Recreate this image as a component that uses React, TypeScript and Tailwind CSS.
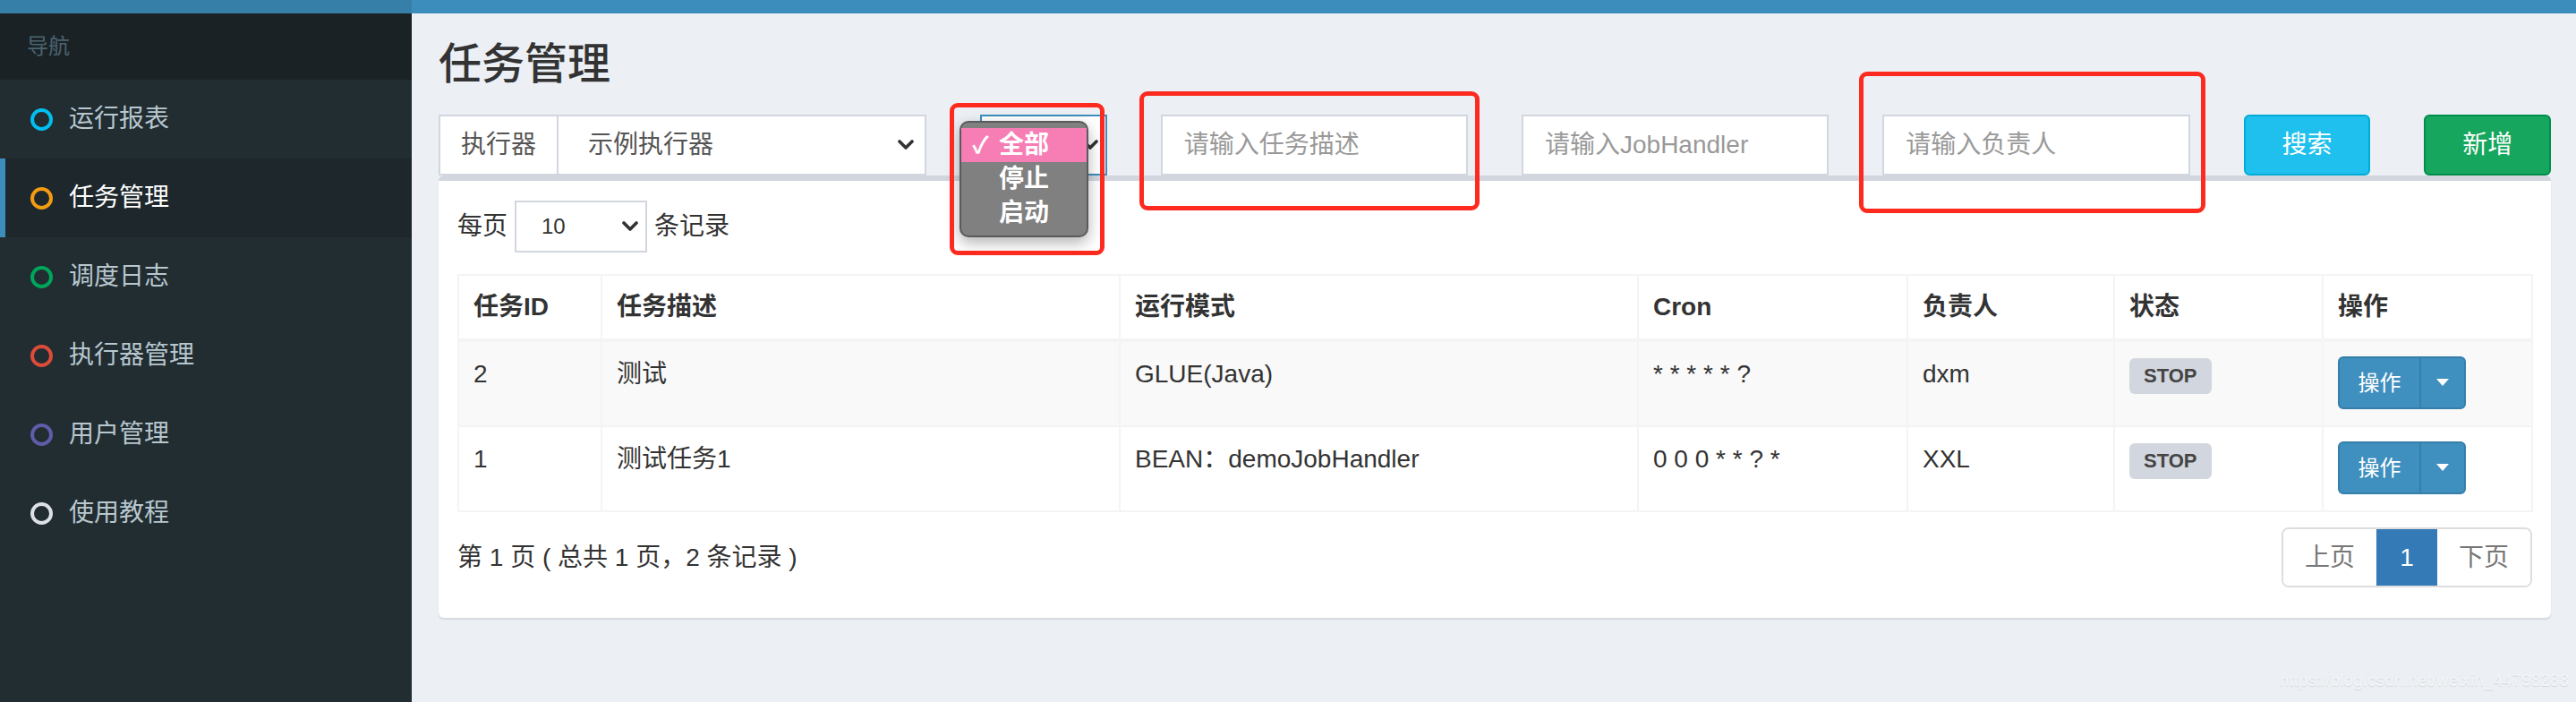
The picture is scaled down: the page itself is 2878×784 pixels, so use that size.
import React from 'react'

const FONT = "font-['Liberation_Sans','Noto_Sans_CJK_SC',sans-serif]"

const menu = [
  { label: '运行报表', ring: 'border-[#00c0ef]' },
  { label: '任务管理', ring: 'border-[#f39c12]', active: true },
  { label: '调度日志', ring: 'border-[#00a65a]' },
  { label: '执行器管理', ring: 'border-[#dd4b39]' },
  { label: '用户管理', ring: 'border-[#605ca8]' },
  { label: '使用教程', ring: 'border-[#dde1e5]' },
]

const rows = [
  { id: '2', desc: '测试', mode: 'GLUE(Java)', cron: '* * * * * ?', owner: 'dxm', striped: true },
  { id: '1', desc: '测试任务1', mode: 'BEAN：demoJobHandler', cron: '0 0 0 * * ? *', owner: 'XXL', striped: false },
]

function Chevron({ className = '' }: { className?: string }) {
  return (
    <svg width="18" height="12" viewBox="0 0 18 12" className={className}>
      <polyline points="2,2 9,9 16,2" fill="none" stroke="#333" strokeWidth="3.6" strokeLinecap="round" strokeLinejoin="round" />
    </svg>
  )
}

function Sidebar() {
  return (
    <aside className="w-[460px] shrink-0 bg-[#222d32]">
      <div className="h-[15px] bg-[#367fa9]" />
      <div className="h-[74px] bg-[#1a2226] pl-[30px] flex items-center text-[24px] text-[#4b646f]">导航</div>
      <ul>
        {menu.map(m => (
          <li
            key={m.label}
            className={
              'h-[88px] flex items-center border-l-[6px] ' +
              (m.active ? 'bg-[#1e282c] border-[#3c8dbc] text-white' : 'border-transparent text-[#b8c7ce]')
            }
          >
            <span className="w-[60px] pl-[28px] flex items-center">
              <span className={'block w-[25px] h-[25px] rounded-full border-[4px] ' + m.ring} />
            </span>
            <span className="text-[28px] leading-[40px] pl-[11px]">{m.label}</span>
          </li>
        ))}
      </ul>
    </aside>
  )
}

function FilterRow() {
  return (
    <div className="grid grid-cols-12 gap-x-[60px] h-[68px]">
      {/* executor */}
      <div className="col-span-3 flex h-[68px]">
        <div className="w-[134px] shrink-0 border-[2px] border-[#d2d6de] bg-white flex items-center justify-center text-[28px] text-[#555]">执行器</div>
        <div className="flex-1 border-[2px] border-l-0 border-[#d2d6de] bg-white flex items-center justify-between pl-[33px] pr-[12px] text-[28px] text-[#555]">
          <span>示例执行器</span>
          <Chevron />
        </div>
      </div>

      {/* status select with open popup */}
      <div className="col-span-1 relative h-[68px]">
        <div className="h-[68px] border-[2px] border-[#3c8dbc] bg-white flex items-center justify-end pr-[8px]">
          <Chevron />
        </div>
        <div className="absolute left-[-23px] top-[7px] w-[144px] h-[130px] rounded-[10px] border-[2px] border-[#5a5a5a] bg-[#808080] shadow-[0_6px_16px_rgba(0,0,0,0.3)] pt-[6px] text-[28px] leading-[38px] font-bold text-white">
          <div className="h-[38px] bg-[#f77db5] flex items-center">
            <span className="w-[42px] pl-[12px] text-[26px]">✓</span>
            <span>全部</span>
          </div>
          <div className="h-[38px] pl-[42px]">停止</div>
          <div className="h-[38px] pl-[42px]">启动</div>
        </div>
        <div className="absolute left-[-34px] top-[-13px] w-[173px] h-[170px] rounded-[9px] border-[5px] border-[#fd2a20]" />
      </div>

      <div className="col-span-2 relative">
        <div className="h-[68px] border-[2px] border-[#d2d6de] bg-white flex items-center pl-[24px] text-[28px] text-[#999]">请输入任务描述</div>
        <div className="absolute left-[-24px] top-[-26px] w-[380px] h-[133px] rounded-[9px] border-[5px] border-[#fd2a20]" />
      </div>

      <div className="col-span-2">
        <div className="h-[68px] border-[2px] border-[#d2d6de] bg-white flex items-center pl-[24px] text-[28px] text-[#999]">请输入JobHandler</div>
      </div>

      <div className="col-span-2 relative">
        <div className="h-[68px] border-[2px] border-[#d2d6de] bg-white flex items-center pl-[24px] text-[28px] text-[#999]">请输入负责人</div>
        <div className="absolute left-[-26px] top-[-48px] w-[387px] h-[158px] rounded-[9px] border-[5px] border-[#fd2a20]" />
      </div>

      <div className="col-span-1">
        <button className="w-full h-[68px] rounded-[6px] border-[2px] border-[#00acd6] bg-[#1fc0ed] text-white text-[28px]">搜索</button>
      </div>
      <div className="col-span-1">
        <button className="w-full h-[68px] rounded-[6px] border-[2px] border-[#008d4c] bg-[#17a65d] text-white text-[28px]">新增</button>
      </div>
    </div>
  )
}

function OpButton() {
  return (
    <div className="inline-flex h-[59px] rounded-[6px] border-[2px] border-[#367fa9] bg-[#3f8fbf] text-white overflow-hidden">
      <span className="w-[89px] flex items-center justify-center text-[24px]">操作</span>
      <span className="w-[50px] border-l-[2px] border-[#367fa9] flex items-center justify-center">
        <svg width="14" height="9" viewBox="0 0 14 9"><polygon points="0,0 14,0 7,8" fill="white" /></svg>
      </span>
    </div>
  )
}

function TaskTable() {
  const th = 'border-[2px] border-[#f4f4f4] border-b-[4px] px-[16px] pt-[15px] pb-[15px] text-left font-bold leading-[40px] align-bottom'
  const td = 'border-[2px] border-[#f4f4f4] px-[16px] pt-[16px] pb-[18px] align-top leading-[40px]'
  return (
    <table className="w-full table-fixed border-collapse text-[28px] text-[#333]">
      <colgroup>
        <col className="w-[160px]" />
        <col className="w-[579px]" />
        <col className="w-[579px]" />
        <col className="w-[301px]" />
        <col className="w-[231px]" />
        <col className="w-[233px]" />
        <col className="w-[234px]" />
      </colgroup>
      <thead>
        <tr>
          <th className={th}>任务ID</th>
          <th className={th}>任务描述</th>
          <th className={th}>运行模式</th>
          <th className={th}>Cron</th>
          <th className={th}>负责人</th>
          <th className={th}>状态</th>
          <th className={th}>操作</th>
        </tr>
      </thead>
      <tbody>
        {rows.map(r => (
          <tr key={r.id} className={r.striped ? 'bg-[#f9f9f9]' : 'bg-white'}>
            <td className={td}>{r.id}</td>
            <td className={td}>{r.desc}</td>
            <td className={td}>{r.mode}</td>
            <td className={td + ' whitespace-pre'}>{r.cron}</td>
            <td className={td}>{r.owner}</td>
            <td className={td}>
              <span className="inline-block mt-[2px] px-[16px] h-[40px] leading-[40px] rounded-[6px] bg-[#d2d6de] text-[#444] text-[22px] font-bold">STOP</span>
            </td>
            <td className={td}>
              <OpButton />
            </td>
          </tr>
        ))}
      </tbody>
    </table>
  )
}

export default function App() {
  return (
    <div className={'flex w-[2878px] min-h-[784px] ' + FONT}>
      <Sidebar />
      <main className="relative flex-1 bg-[#ecf0f5]">
        <div className="h-[15px] bg-[#3c8dbc]" />
        <div className="px-[30px] pt-[30px]">
          <h1 className="text-[48px] leading-[53px] font-medium text-[#333]">任务管理</h1>
        </div>
        <section className="px-[30px] pt-[30px]">
          <FilterRow />
          <div className="w-[2360px] bg-white border-t-[6px] border-[#d2d6de] rounded-[6px] shadow-[0_2px_2px_rgba(0,0,0,0.1)] px-[21px] pt-[22px] pb-[34px]">
            <div className="flex items-center h-[58px] text-[28px] text-[#333]">
              <span>每页</span>
              <div className="ml-[8px] mr-[8px] w-[148px] h-[58px] border-[2px] border-[#d2d6de] bg-white flex items-center justify-between pl-[28px] pr-[8px]">
                <span className="text-[24px]">10</span>
                <Chevron />
              </div>
              <span>条记录</span>
            </div>
            <div className="mt-[24px]">
              <TaskTable />
            </div>
            <div className="mt-[17px] flex items-center justify-between">
              <div className="text-[28px] text-[#333]">第 1 页 ( 总共 1 页，2 条记录 )</div>
              <div className="flex h-[67px] rounded-[8px] border-[2px] border-[#ddd] overflow-hidden text-[28px]">
                <span className="w-[104px] flex items-center justify-center text-[#777] bg-white">上页</span>
                <span className="w-[68px] flex items-center justify-center text-white bg-[#337ab7]">1</span>
                <span className="w-[104px] flex items-center justify-center text-[#777] bg-white">下页</span>
              </div>
            </div>
          </div>
        </section>
        <div className="absolute right-[10px] bottom-[10px] text-[19px] text-[#f4f6f9] [text-shadow:0_1px_1px_rgba(0,0,0,0.12)]">https://blog.csdn.net/weixin_44798288</div>
      </main>
    </div>
  )
}
